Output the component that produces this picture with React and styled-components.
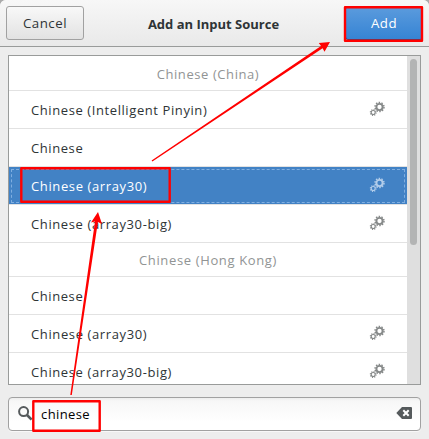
import React from "react";
import styled, { createGlobalStyle } from "styled-components";

const Global = createGlobalStyle`
  * { box-sizing: border-box; }
  html, body { margin: 0; overflow: hidden; }
  body { font-family: "Open Sans", "Noto Sans", sans-serif; font-size: 13px; color: #2e3436; }
`;
const Dialog = styled.main`
  position: relative;
  display: flex;
  flex-direction: column;
  width: 429px;
  height: 439px;
  background: #ededed;
  overflow: hidden;
`;
const Header = styled.header`
  display: flex;
  align-items: center;
  justify-content: space-between;
  height: 47px;
  padding: 0 6px 1px;
  border-bottom: 1px solid #999b9a;
  border-radius: 6px 6px 0 0;
  background: linear-gradient(#f7f7f7, #e9e9e9);
  box-shadow: 0 -6px 0 #aaa;
`;
const Title = styled.h1`
  margin: 2px 2px 0 0;
  font-size: 13px;
  line-height: 20px;
  font-weight: 700;
  letter-spacing: ${(p) => p.$spacing}px;
  white-space: nowrap;
`;
const Button = styled.button`
  width: 78px;
  height: 34px;
  padding: 1px 0 0;
  border: 1px solid ${(p) => (p.$primary ? "#1c5187" : "#a1a1a1")};
  border-radius: 3px;
  background: ${(p) => (p.$primary ? "linear-gradient(#5b9bdd, #3684d4)" : "linear-gradient(#f8f8f8, #e2e2e2)")};
  color: ${(p) => (p.$primary ? "#fff" : "#2e3436")};
  font: inherit;
  font-size: 13.3px;
  letter-spacing: ${(p) => p.$spacing}px;
`;
const Body = styled.section`
  display: flex;
  flex-direction: column;
  gap: 12px;
  padding: 8px 8px 0;
`;
const ListFrame = styled.div`
  display: flex;
  width: 413px;
  height: 330px;
  border: 1px solid #999b9a;
  background: #fff;
  overflow: hidden;
`;
const List = styled.div`
  width: 398px;
  flex: none;
`;
const Group = styled.div`
  height: ${(p) => p.$height}px;
  padding-top: ${(p) => p.$height - 34}px;
  border-bottom: 1px solid #e2e2e2;
  color: #919494;
  line-height: 34px;
  text-align: center;
  letter-spacing: ${(p) => p.$spacing}px;
`;
const Row = styled.div`
  display: flex;
  align-items: center;
  justify-content: space-between;
  height: 38px;
  padding: 0 22px;
  border-bottom: 1px solid #e2e2e2;
  background: ${(p) => (p.$selected ? "#4282c5" : "#fff")};
  color: ${(p) => (p.$selected ? "#fff" : "#2e3436")};
  background-clip: padding-box;
  outline: ${(p) => (p.$selected ? "1px dashed #80aee0" : "none")};
  outline-offset: -3px;
  line-height: 36px;
  letter-spacing: ${(p) => p.$spacing}px;
  white-space: nowrap;
`;
const Track = styled.div`
  width: 13px;
  padding: 3px;
  background: #dfdfdf;
`;
const Thumb = styled.div`
  width: 7px;
  height: 186px;
  border-radius: 4px;
  background: #b3b4b4;
`;
const Search = styled.div`
  display: flex;
  align-items: center;
  width: 413px;
  height: 34px;
  padding: 0 8px;
  border: 1px solid #a1a1a1;
  border-radius: 4px;
  background: linear-gradient(#ededed, #f7f7f7 3px, #fff 24px);
  box-shadow: 0 1px 0 #f8f8f8;
`;
const Query = styled.span`
  flex: 1;
  margin: -1px 0 0 8px;
  color: #000;
  letter-spacing: ${(p) => p.$spacing}px;
`;
const Icon = styled.svg`
  display: block;
  flex: none;
  color: ${(p) => p.$color};
  margin-top: ${(p) => p.$lift ?? -3}px;
`;
const Marks = styled.svg`
  position: absolute;
  inset: 0;
  pointer-events: none;
`;

const Gears = ({ selected }) => (
  <Icon $lift={-1} $color={selected ? "#b3cdea" : "#868989"} width="16" height="16" viewBox="0 0 16 16" fill="none" stroke="currentColor">
    <circle cx="10.5" cy="6" r="3.1" strokeWidth="1.9" />
    <circle cx="10.5" cy="6" r="4.5" strokeWidth="1.5" strokeDasharray="1.5 1.327" />
    <circle cx="4.2" cy="11.5" r="2" strokeWidth="1.1" />
    <circle cx="4.2" cy="11.5" r="2.9" strokeWidth="1.1" strokeDasharray="1.1 1.177" />
  </Icon>
);

const sources = [
  { group: "Chinese (China)", height: 35, spacing: 0.58 },
  { name: "Chinese (Intelligent Pinyin)", gears: true, spacing: 0.59 },
  { name: "Chinese", spacing: 0.58 },
  { name: "Chinese (array30)", gears: true, selected: true, spacing: 0.62 },
  { name: "Chinese (array30-big)", gears: true, spacing: 0.61 },
  { group: "Chinese (Hong Kong)", height: 34, spacing: 0.64 },
  { name: "Chinese", spacing: 0.58 },
  { name: "Chinese (array30)", gears: true, spacing: 0.62 },
  { name: "Chinese (array30-big)", gears: true, spacing: 0.61 },
];

export default function App() {
  return (
    <Dialog>
      <Global />
      <Header>
        <Button $spacing={0.5}>Cancel</Button>
        <Title $spacing={0}>Add an Input Source</Title>
        <Button $primary $spacing={0.5}>Add</Button>
      </Header>
      <Body>
        <ListFrame>
          <List>
            {sources.map((s, i) =>
              s.group ? (
                <Group key={i} $height={s.height} $spacing={s.spacing}>{s.group}</Group>
              ) : (
                <Row key={i} $selected={s.selected} $spacing={s.spacing}>
                  <span>{s.name}</span>
                  {s.gears && <Gears selected={s.selected} />}
                </Row>
              )
            )}
          </List>
          <Track><Thumb /></Track>
        </ListFrame>
        <Search>
          <Icon $color="#555a5c" width="16" height="16" viewBox="0 0 16 16" fill="none" stroke="currentColor">
            <circle cx="6.6" cy="6.6" r="4.5" strokeWidth="2" />
            <path d="M10 10L14.6 14.6" strokeWidth="2.6" />
          </Icon>
          <Query $spacing={0.4}>chinese</Query>
          <Icon $color="#555a5c" width="16" height="14" viewBox="0 0 16 14">
            <path d="M6 1H15Q16 1 16 2V12Q16 13 15 13H6L0.3 7Z" fill="currentColor" />
            <path d="M7.3 4.3L12.7 9.7M12.7 4.3L7.3 9.7" stroke="#fff" strokeWidth="2" />
          </Icon>
        </Search>
      </Body>
      <Marks width="429" height="439" viewBox="0 0 429 439" fill="#f00">
        <g fill="none" stroke="#f00" strokeWidth="2.4" strokeLinejoin="round">
          <rect x="345" y="7.3" width="77" height="33.4" />
          <rect x="21.3" y="168.3" width="148.4" height="33.4" />
          <rect x="33.3" y="401.3" width="66.4" height="29.4" />
        </g>
        <path d="M151.6 160.4L321 46L318.8 43L330 42L324.5 51.8L322.6 48.2L152.4 161.6Z" />
        <path d="M70.3 395L95 221.5L91 222.5L98 212L102 224L97.9 221.9L71.8 395.1Z" />
      </Marks>
    </Dialog>
  );
}
